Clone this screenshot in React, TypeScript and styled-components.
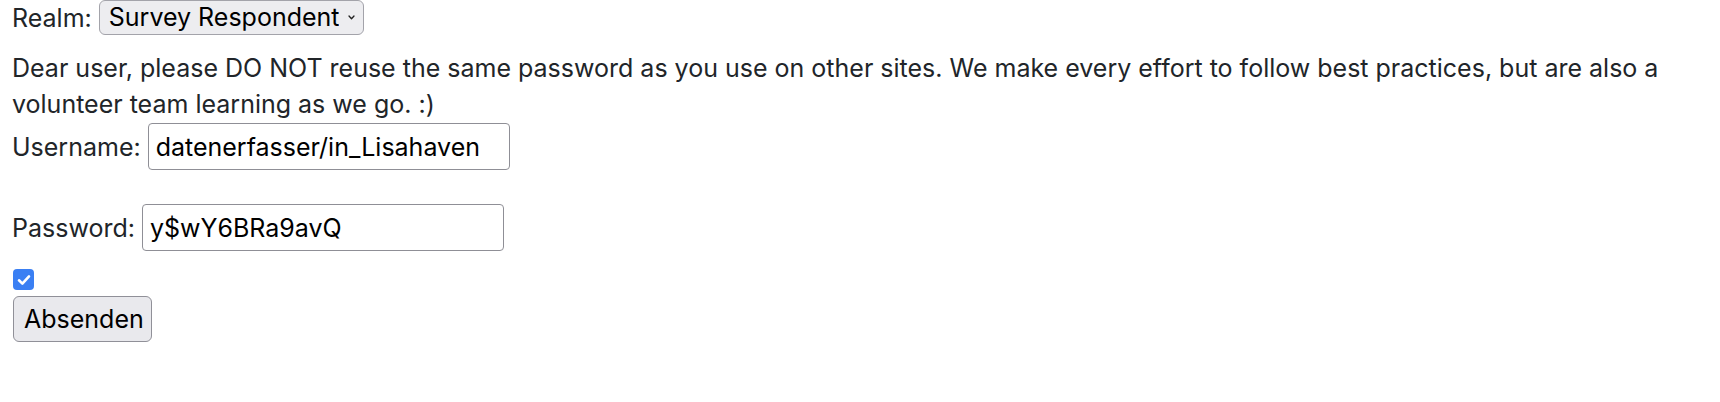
import React from "react";
import styled, { createGlobalStyle } from "styled-components";

const GlobalStyle = createGlobalStyle`
  html, body {
    margin: 0;
    padding: 0;
    background: #ffffff;
  }
  body {
    font-family: Inter, "Noto Sans", "Liberation Sans", sans-serif;
    color: #212529;
  }
`;

const Page = styled.div`
  padding: 0 12px;
  font-size: 25px;
  line-height: 36px;
  color: #212529;
  font-family: Inter, "Noto Sans", "Liberation Sans", sans-serif;
`;

const Row = styled.div<{ $mt?: number; $gap?: number; $h?: number }>`
  display: flex;
  align-items: center;
  gap: ${(p) => p.$gap ?? 7}px;
  margin-top: ${(p) => p.$mt ?? 0}px;
  height: ${(p) => p.$h ?? 36}px;
`;

const Label = styled.label`
  font-size: 25px;
  line-height: 36px;
  color: #212529;
  white-space: nowrap;
`;

const SelectWrap = styled.div`
  position: relative;
  display: inline-flex;
  align-self: flex-start;
`;

const Select = styled.select`
  appearance: none;
  -webkit-appearance: none;
  width: 265px;
  height: 35px;
  box-sizing: border-box;
  padding: 0 24px 0 9px;
  margin: 0;
  font-family: inherit;
  font-size: 25px;
  line-height: 33px;
  color: #000000;
  background: #ededf0;
  border: 1px solid #a3a3aa;
  border-radius: 6px;
  outline: none;
`;

const Chevron = styled.svg`
  position: absolute;
  right: 9px;
  top: 15px;
  width: 7px;
  height: 5px;
  pointer-events: none;
`;

const Notice = styled.p`
  margin: 14px 0 0;
  font-size: 25px;
  line-height: 36px;
`;

const TextInput = styled.input`
  box-sizing: border-box;
  width: 362px;
  height: 47px;
  margin: 0;
  padding: 0 7px;
  font-family: inherit;
  font-size: 25px;
  color: #000000;
  background: #ffffff;
  border: 1px solid #8f8f96;
  border-radius: 4px;
  outline: none;
`;

const CheckRow = styled.div`
  display: flex;
  margin-top: 18px;
  height: 21px;
`;

const CheckBox = styled.span`
  display: inline-flex;
  align-items: center;
  justify-content: center;
  width: 21px;
  height: 21px;
  box-sizing: border-box;
  margin-left: 1px;
  background: #3a7ff3;
  border-radius: 4px;
`;

const SubmitButton = styled.button`
  display: block;
  box-sizing: border-box;
  width: 139px;
  height: 46px;
  margin: 6px 0 0 1px;
  padding: 0 10px;
  font-family: inherit;
  font-size: 25px;
  color: #000000;
  background: #e9e9ed;
  border: 1px solid #909098;
  border-radius: 6px;
`;

export default function App() {
  return (
    <>
      <GlobalStyle />
      <Page>
        <Row $h={36}>
          <Label htmlFor="realm">Realm:</Label>
          <SelectWrap>
            <Select id="realm" defaultValue="survey">
              <option value="survey">Survey Respondent</option>
            </Select>
            <Chevron viewBox="0 0 7 5">
              <path d="M1 1 L3.5 3.8 L6 1" fill="none" stroke="#222" strokeWidth="1.3" strokeLinecap="round" strokeLinejoin="round" />
            </Chevron>
          </SelectWrap>
        </Row>
        <Notice>
          Dear user, please DO NOT reuse the same password as you use on other sites. We make every effort to follow best
          practices, but are also a volunteer team learning as we go. :)
        </Notice>
        <Row $h={47} $mt={1}>
          <Label htmlFor="username">Username:</Label>
          <TextInput id="username" type="text" defaultValue="datenerfasser/in_Lisahaven" />
        </Row>
        <Row $h={47} $mt={34}>
          <Label htmlFor="password">Password:</Label>
          <TextInput id="password" type="text" defaultValue="y$wY6BRa9avQ" />
        </Row>
        <CheckRow>
          <CheckBox role="checkbox" aria-checked="true">
            <svg width="14" height="12" viewBox="0 0 14 12">
              <path d="M2 6.3 L5.4 9.6 L12 2.4" fill="none" stroke="#ffffff" strokeWidth="2.6" strokeLinecap="round" strokeLinejoin="round" />
            </svg>
          </CheckBox>
        </CheckRow>
        <SubmitButton type="submit">Absenden</SubmitButton>
      </Page>
    </>
  );
}
